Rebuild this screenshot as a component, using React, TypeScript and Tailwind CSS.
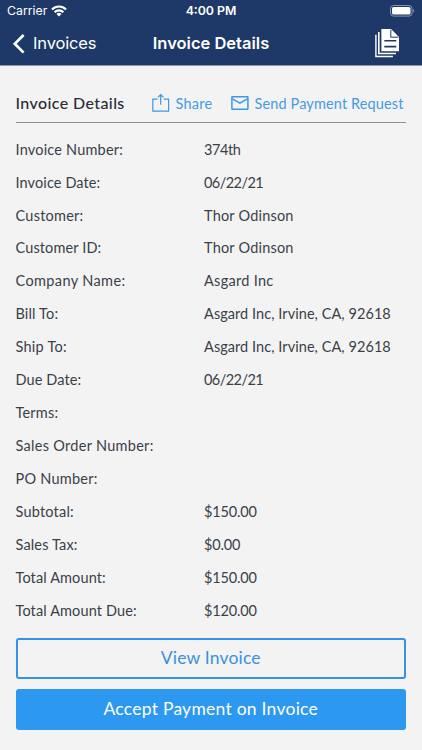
import React from "react";

type Row = { label: string; value: string; labelTracking: string; valueTracking: string };

const rows: Row[] = [
  { label: "Invoice Number:", value: "374th", labelTracking: "tracking-[0.19px]", valueTracking: "tracking-[-0.4px]" },
  { label: "Invoice Date:", value: "06/22/21", labelTracking: "tracking-[0.11px]", valueTracking: "tracking-[-0.55px]" },
  { label: "Customer:", value: "Thor Odinson", labelTracking: "tracking-[0.24px]", valueTracking: "tracking-[0.2px]" },
  { label: "Customer ID:", value: "Thor Odinson", labelTracking: "tracking-[0.13px]", valueTracking: "tracking-[0.2px]" },
  { label: "Company Name:", value: "Asgard Inc", labelTracking: "tracking-[0.38px]", valueTracking: "tracking-[0.3px]" },
  { label: "Bill To:", value: "Asgard Inc, Irvine, CA, 92618", labelTracking: "tracking-[0.15px]", valueTracking: "tracking-[0.06px]" },
  { label: "Ship To:", value: "Asgard Inc, Irvine, CA, 92618", labelTracking: "tracking-[0.25px]", valueTracking: "tracking-[0.06px]" },
  { label: "Due Date:", value: "06/22/21", labelTracking: "tracking-[0.1px]", valueTracking: "tracking-[-0.55px]" },
  { label: "Terms:", value: "", labelTracking: "tracking-[0.2px]", valueTracking: "" },
  { label: "Sales Order Number:", value: "", labelTracking: "tracking-[0.29px]", valueTracking: "" },
  { label: "PO Number:", value: "", labelTracking: "tracking-[0.24px]", valueTracking: "" },
  { label: "Subtotal:", value: "$150.00", labelTracking: "tracking-[0.2px]", valueTracking: "tracking-[-0.15px]" },
  { label: "Sales Tax:", value: "$0.00", labelTracking: "tracking-[0.15px]", valueTracking: "tracking-[-0.15px]" },
  { label: "Total Amount:", value: "$150.00", labelTracking: "tracking-[0.12px]", valueTracking: "tracking-[-0.15px]" },
  { label: "Total Amount Due:", value: "$120.00", labelTracking: "tracking-[0.12px]", valueTracking: "tracking-[-0.15px]" },
];

function WifiIcon() {
  return (
    <svg width="16" height="12" viewBox="0 0 16 12" fill="none" stroke="white" strokeWidth="2.1">
      <path d="M1 4.4a10 10 0 0 1 14 0" />
      <path d="M3.6 7.2a6.2 6.2 0 0 1 8.8 0" />
      <path d="M8 11.6 5.5 9a3.6 3.6 0 0 1 5 0Z" fill="white" stroke="none" />
    </svg>
  );
}

function BatteryIcon() {
  return (
    <svg width="25" height="12" viewBox="0 0 25 12" fill="none">
      <rect x="0.5" y="0.5" width="21.5" height="10.6" rx="3" stroke="#8594b3" />
      <rect x="2" y="2" width="18.5" height="7.6" rx="1.6" fill="white" />
      <path d="M23.2 4v3.8c1.5-.7 1.5-3.1 0-3.8Z" fill="#8594b3" />
    </svg>
  );
}

function DocumentsIcon() {
  return (
    <svg width="25" height="29" viewBox="0 0 25 29" fill="none">
      <path d="M0.9 5.8v21.7h17" stroke="white" strokeWidth="1.4" />
      <path d="M3.8 3v21.5h17.2" stroke="white" strokeWidth="1.6" />
      <path d="M6.4 0H16l8 8v14.2H6.4Z" fill="white" />
      <path d="M15.8 0.8v7.4h7.6" stroke="#1e3967" strokeWidth="1" />
      <path d="M9.3 11.8h12M9.3 17.6h12" stroke="#1e3967" strokeWidth="1.6" />
    </svg>
  );
}

function ShareIcon() {
  return (
    <svg width="18" height="19" viewBox="0 0 18 19" fill="none" stroke="#3c97e8" strokeWidth="1.2">
      <path d="M5.5 5.1H.8v12h15.8v-12h-4.7" />
      <path d="M8.7 10.8V0.7M5.9 3.4l2.8-2.8 2.8 2.8" />
    </svg>
  );
}

function MailIcon() {
  return (
    <svg width="18" height="15" viewBox="0 0 18 15" fill="none" stroke="#3c97e8" strokeWidth="1.5">
      <rect x="0.9" y="0.7" width="16" height="12.6" rx="0.5" />
      <path d="m1.5 2.8 7.4 4.4 7.4-4.4" />
    </svg>
  );
}

export default function App() {
  return (
    <div className="flex h-[750px] w-[422px] flex-col overflow-hidden bg-[#f3f3f3] font-['Lato',sans-serif] text-[#3a3f49]">
      <header className="h-[66px] shrink-0 border-b border-[#8c9ab4] bg-[#1e3967] font-['Inter',sans-serif] text-white">
        <div className="grid h-[22px] grid-cols-[1fr_auto_1fr] items-center px-[7px]">
          <div className="flex items-center gap-[4px]">
            <span className="text-[12.3px] leading-[22px]">Carrier</span>
            <WifiIcon />
          </div>
          <span className="text-[12.3px] font-semibold leading-[22px]">4:00 PM</span>
          <div className="flex justify-end">
            <BatteryIcon />
          </div>
        </div>
        <div className="grid h-[43px] grid-cols-[1fr_auto_1fr] items-center px-[13px]">
          <div className="flex items-center gap-[8px]">
            <svg width="12" height="20" viewBox="0 0 12 20" fill="none" stroke="white" strokeWidth="2.7">
              <path d="M10.6 1 1.8 9.8l8.8 8.8" />
            </svg>
            <span className="text-[16.5px] tracking-[-0.15px]">Invoices</span>
          </div>
          <h1 className="text-[16.5px] font-semibold">Invoice Details</h1>
          <div className="flex justify-end pr-[9px]">
            <DocumentsIcon />
          </div>
        </div>
      </header>
      <main className="pl-[15.5px] pr-[16px]">
        <div className="mt-[19px] flex h-[38px] items-center border-b border-[#929292]">
          <h2 className="w-[136px] whitespace-nowrap pb-[1px] text-[16px] font-medium tracking-[0.4px] text-[#292c33]">Invoice Details</h2>
          <button className="flex w-[79px] items-center gap-[6px] whitespace-nowrap text-[14.5px] tracking-[0.25px] text-[#459be5]">
            <ShareIcon />
            Share
          </button>
          <button className="flex items-center gap-[6px] whitespace-nowrap text-[14.5px] tracking-[0.13px] text-[#459be5]">
            <MailIcon />
            Send Payment Request
          </button>
        </div>
        <dl className="mt-[10.1px]">
          {rows.map((row) => (
            <div key={row.label} className="flex h-[32.93px] items-center whitespace-nowrap text-[14.5px]">
              <dt className={`w-[188.5px] ${row.labelTracking}`}>{row.label}</dt>
              <dd className={row.valueTracking}>{row.value}</dd>
            </div>
          ))}
        </dl>
        <div className="mt-[10.8px] flex flex-col gap-[10px]">
          <button className="h-[41px] rounded-[3px] border-2 border-[#3792e3] text-[17.5px] tracking-[0.18px] text-[#3b91df]">View Invoice</button>
          <button className="h-[41px] rounded-[3px] bg-[#2c98f0] text-[17.5px] tracking-[0.25px] text-white">Accept Payment on Invoice</button>
        </div>
      </main>
    </div>
  );
}
